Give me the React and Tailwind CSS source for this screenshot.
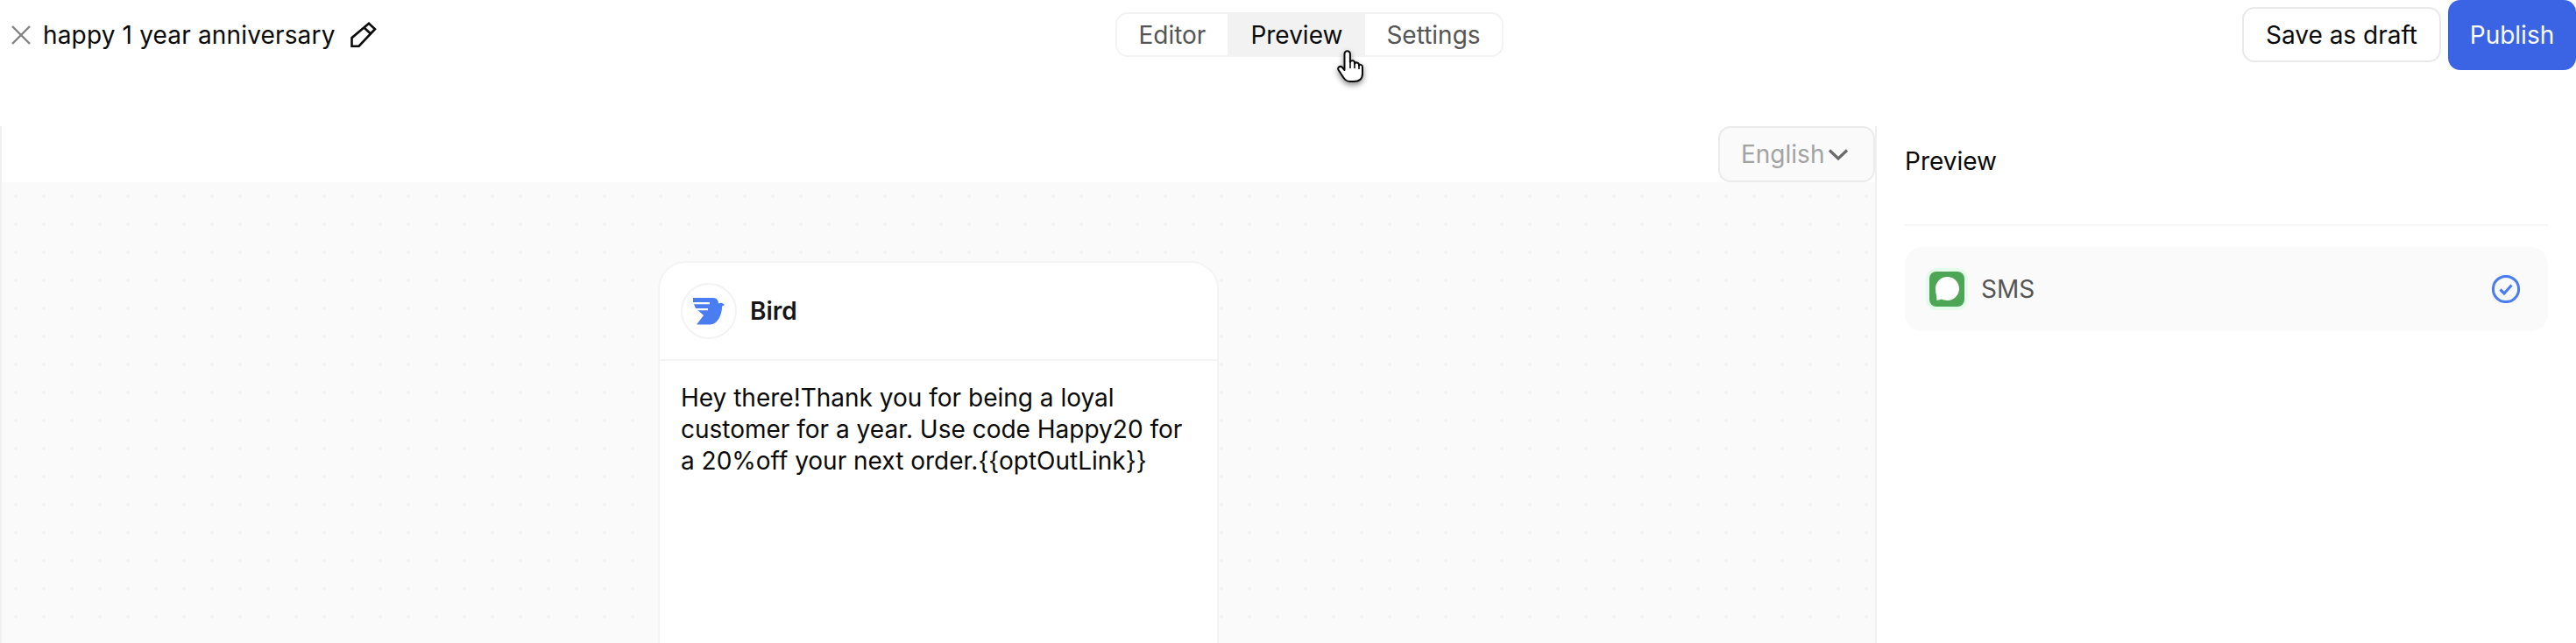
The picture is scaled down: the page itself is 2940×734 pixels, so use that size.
export default function App() {
  return (
    <div className="relative h-[734px] w-[2940px] overflow-hidden bg-white font-['Inter',sans-serif] text-[28px] leading-[36px] text-[#0a0a0a]">
      <header className="flex h-[144px] items-start justify-between">
        <div className="flex h-[80px] w-[430px] items-center pl-[13px]">
          <svg width="22" height="22" viewBox="0 0 22 22" fill="none" stroke="#808080" strokeWidth="2.4" className="shrink-0">
            <path d="M1 1 21 21M21 1 1 21" />
          </svg>
          <span className="ml-[14px] whitespace-nowrap tracking-[0.16px]">happy 1 year anniversary</span>
          <svg width="30" height="30" viewBox="0 0 30 30" fill="none" stroke="#0a0a0a" strokeWidth="2.6" strokeLinejoin="miter" className="ml-[17px] shrink-0">
            <path d="M1.5 27.7V18.2L21 1.8 28 8.2 9.6 27.7Z" />
            <path d="M15.5 6.5 23.5 14" />
          </svg>
        </div>
        <nav className="mt-[14px] flex h-[51px] overflow-hidden rounded-[14px] border-2 border-[#f3f3f3] text-[#555555]">
          <div className="flex items-center pl-[24px] pr-[25px]">Editor</div>
          <div className="flex items-center bg-[#f2f2f2] px-[26px] text-[#0a0a0a]">Preview</div>
          <div className="flex items-center px-[24px]">Settings</div>
        </nav>
        <div className="flex w-[381px] items-start gap-[8px]">
          <button className="mt-[8px] flex h-[63px] w-[227px] items-center justify-center rounded-[14px] border-2 border-[#e9e9e9] bg-white">
            Save as draft
          </button>
          <button className="flex h-[80px] w-[146px] items-center justify-center rounded-[14px] bg-[#3b64e4] text-[#fafcff]">
            Publish
          </button>
        </div>
      </header>

      <main className="flex h-[590px]">
        <section className="flex w-[2142px] flex-col border-x-2 border-[#f0f0f0]">
          <div className="flex h-[64px] shrink-0 justify-end">
            <div className="flex h-[64px] w-[179px] items-center rounded-[14px] border-2 border-[#ebebeb] bg-[#fafafa] pl-[24px] text-[#a3a3a3]">
              <span>English</span>
              <svg width="24" height="15" viewBox="0 0 24 15" fill="none" stroke="#6b6b6b" strokeWidth="3.2" className="ml-[4px]">
                <path d="M2 2.5 12 12 22 2.5" />
              </svg>
            </div>
          </div>
          <div className="flex flex-1 justify-center bg-[#fafafa] bg-[radial-gradient(circle,#f2f2f2_1.5px,transparent_2px)] bg-[length:32px_32px] pt-[90px]">
            <article className="h-[700px] w-[640px] shrink-0 rounded-[32px] border-2 border-[#f4f4f4] bg-white">
              <div className="flex h-[112px] items-center border-b-2 border-[#f4f4f4] pl-[24px]">
                <div className="flex h-[64px] w-[64px] items-center justify-center rounded-full border-2 border-[#f3f3f3]">
                  <svg width="36" height="31" viewBox="0 0 36 31">
                    <path fill="#4a7ef0" d="M0 0H23C28 0 30 5 28.5 9L25.5 15.5 28 8C29 5.5 32 5 34 6.5L36 8 33.2 9.5C33 18 29 30.5 19 30.5H4L12 20 3 12 0 5Z" />
                    <path stroke="#fff" strokeWidth="2.2" fill="none" d="M-1 6.2H19M2 13.2H17" />
                  </svg>
                </div>
                <span className="ml-[15px] font-semibold text-[#171717]">Bird</span>
              </div>
              <p className="px-[24px] pt-[24px]">
                Hey there!Thank you for being a loyal customer for a year. Use code Happy20 for a 20%off your next order.{"{{optOutLink}}"}
              </p>
            </article>
          </div>
        </section>

        <aside className="flex-1 px-[32px]">
          <div className="border-b-2 border-[#f5f5f5] pb-[54px] pt-[22px]">Preview</div>
          <div className="mt-[24px] flex h-[96px] items-center rounded-[20px] bg-[#fafafa] pl-[24px] pr-[32px]">
            <div className="flex h-[48px] w-[48px] items-center justify-center rounded-[12px] bg-[#e5fbec]">
              <svg width="40" height="40" viewBox="0 0 40 40">
                <rect width="40" height="40" rx="8" fill="#4ca656" />
                <path fill="#fff" d="M20.5 6C28 6 34 12 34 19.5S28 33 20.5 33C18 33 16 32.7 14 31.6L8.5 33 8 26.5C7 24.5 7 22 7 19.5 7 12 13 6 20.5 6Z" />
              </svg>
            </div>
            <span className="ml-[15px] text-[#555555]">SMS</span>
            <svg width="32" height="32" viewBox="0 0 32 32" fill="none" stroke="#4a7ef0" className="ml-auto">
              <circle cx="16" cy="16" r="14.6" strokeWidth="3" />
              <path d="M9.5 16.5 14 21 22.5 11.5" strokeWidth="3.2" />
            </svg>
          </div>
        </aside>
      </main>

      <svg width="31" height="39" viewBox="0 0 31 39" className="absolute left-[1526px] top-[57px] drop-shadow-[0_3px_3px_rgba(0,0,0,0.45)]">
        <path fill="#fff" stroke="#0a0a0a" strokeWidth="2" strokeLinejoin="round" d="M8.5 23V4.5A3.2 3.2 0 0 1 14.9 4.5V14C15 11.5 20 11.5 20 14.5V16C20.5 13.5 25 14 25 17V18C25.5 16 29 16.5 29 19.5V27C29 33 25 36 19 36H15C10 36 8 33 5 28L1.7 23C0 20 3.5 17.5 6 20Z" />
        <path fill="none" stroke="#0a0a0a" strokeWidth="1.6" d="M15 14V21M20 15V21M25 18V22" />
      </svg>
    </div>
  );
}
